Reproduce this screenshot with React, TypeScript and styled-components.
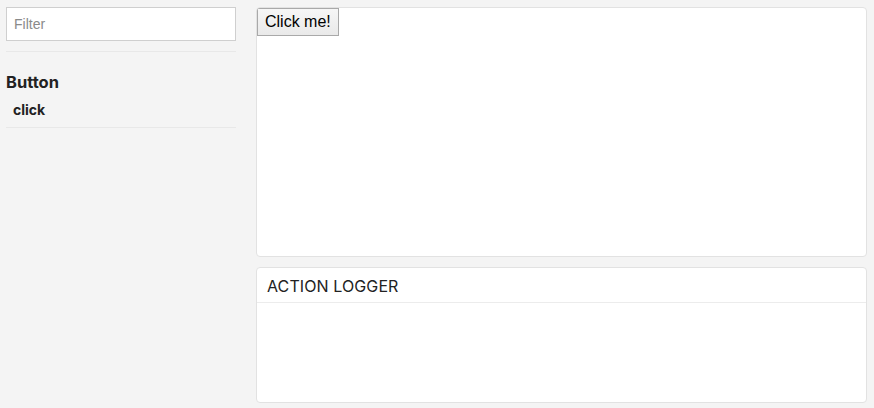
import React from "react";
import styled, { createGlobalStyle } from "styled-components";

const GlobalStyle = createGlobalStyle`
  html, body {
    margin: 0;
    padding: 0;
    background: #f4f4f4;
  }
`;

const Layout = styled.div`
  display: flex;
  gap: 20px;
  padding: 7px 7px 5px 6px;
  height: 408px;
  box-sizing: border-box;
  background: #f4f4f4;
`;

const Sidebar = styled.div`
  width: 230px;
  flex-shrink: 0;
  display: flex;
  flex-direction: column;
`;

const FilterInput = styled.input`
  box-sizing: border-box;
  width: 100%;
  height: 34px;
  border: 1px solid #cfcfcf;
  border-radius: 0;
  padding: 0 7px;
  font-family: "Liberation Sans", Arial, sans-serif;
  font-size: 14px;
  color: #333;
  background: #fff;
  outline: none;

  &::placeholder {
    color: #8a8a8a;
  }
`;

const Divider = styled.div<{ $top: number }>`
  height: 1px;
  background: #e8e8e8;
  margin-top: ${(p) => p.$top}px;
`;

const Kind = styled.h3`
  margin: 21px 0 0;
  font-family: Inter, "Open Sans", sans-serif;
  font-size: 16.5px;
  font-weight: 700;
  color: #222;
  line-height: 18px;
`;

const StoryLink = styled.div`
  margin: 11px 0 0 7px;
  font-family: Inter, "Open Sans", sans-serif;
  font-size: 14px;
  font-weight: 700;
  color: #222;
  line-height: 16px;
`;

const Main = styled.div`
  flex: 1;
  display: flex;
  flex-direction: column;
  gap: 10px;
`;

const Panel = styled.div<{ $height: number }>`
  box-sizing: border-box;
  height: ${(p) => p.$height}px;
  background: #fff;
  border: 1px solid #e2e2e2;
  border-radius: 4px;
  overflow: hidden;
  display: flex;
  flex-direction: column;
`;

const DemoButton = styled.button`
  align-self: flex-start;
  height: 28px;
  padding: 0 7px;
  font-family: "Liberation Sans", Arial, sans-serif;
  font-size: 16px;
  color: #000;
  background: linear-gradient(#f6f6f6, #e9e9e9);
  border: 1px solid #a9a9a9;
  border-radius: 0;
`;

const PanelHeader = styled.div`
  height: 35px;
  box-sizing: border-box;
  padding: 1px 10px 0;
  display: flex;
  align-items: center;
  border-bottom: 1px solid #ececec;
  font-family: Inter, "Open Sans", sans-serif;
  font-size: 16px;
  color: #222;
  letter-spacing: 0.1px;
`;

const App: React.FC = () => {
  return (
    <>
      <GlobalStyle />
      <Layout>
        <Sidebar>
          <FilterInput placeholder="Filter" />
          <Divider $top={10} />
          <Kind>Button</Kind>
          <StoryLink>click</StoryLink>
          <Divider $top={9} />
        </Sidebar>
        <Main>
          <Panel $height={250}>
            <DemoButton>Click me!</DemoButton>
          </Panel>
          <Panel $height={136}>
            <PanelHeader>ACTION LOGGER</PanelHeader>
          </Panel>
        </Main>
      </Layout>
    </>
  );
};

export default App;
